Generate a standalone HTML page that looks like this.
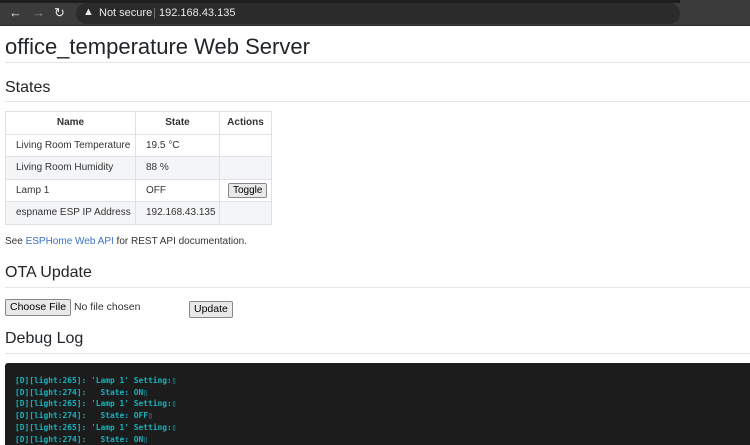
<!DOCTYPE html>
<html><head><style>
*{box-sizing:border-box}
body{margin:0;width:750px;height:445px;overflow:hidden;background:#fff;font-family:"Liberation Sans",sans-serif;color:#212529}
.bar{height:26px;background:#3b3b3b;position:relative;border-bottom:1px solid #2a2a2a}
.bar .top{position:absolute;left:0;top:0;width:680px;height:3px;background:#1e1e1e}
.pill{position:absolute;left:76px;top:3px;width:604px;height:21px;background:#2b2b2b;border-radius:11px}
.bar span{position:absolute;color:#e8e8e8;font-size:11px;top:7px}
.hd{position:absolute;left:5px;color:#212529;font-weight:normal}
.hr{position:absolute;left:5px;right:0;height:1px;background:#e5e5e5}
table{position:absolute;left:5px;top:111px;border-collapse:collapse;font-size:10px;color:#333;table-layout:fixed;width:266px}
td,th{border:1px solid #dee2e6;padding:0 0 0 10px;height:22.5px;text-align:left;white-space:nowrap;overflow:hidden}
th{text-align:center;font-weight:bold;color:#333;padding:0}
tr.g td{background:#f4f5f7}
.btn{display:inline-block;font-size:10px;border:1px solid #888;background:#e9e9e9;border-radius:2px;padding:1px 4px;color:#000;line-height:11px}
.log{position:absolute;left:5px;top:363px;width:745px;height:82px;background:#1c1c1c;border-radius:3px 0 0 0;padding:12px 10px;font-family:"DejaVu Sans Mono",monospace;font-weight:bold;font-size:7.9px;line-height:11.7px;color:#17b3bd;white-space:pre}
</style></head><body>
<div class="bar"><div class="top"></div><div class="pill"></div>
<span style="left:9px;top:5px;font-size:13px">←</span><span style="left:32px;top:5px;font-size:13px;color:#888">→</span><span style="left:54px;top:5px;font-size:13px">↻</span>
<span style="left:83px;top:6px;font-size:11px">▲</span><span style="left:99px">Not secure</span><span style="left:153px;color:#777">|</span><span style="left:159px">192.168.43.135</span></div>
<div class="hd" style="top:34px;font-size:22px">office_temperature Web Server</div>
<div class="hr" style="top:62px"></div>
<div class="hd" style="top:79px;font-size:16px">States</div>
<div class="hr" style="top:101px"></div>
<table>
<colgroup><col style="width:130px"><col style="width:84px"><col style="width:52px"></colgroup>
<tr><th>Name</th><th>State</th><th>Actions</th></tr>
<tr><td>Living Room Temperature</td><td>19.5 °C</td><td></td></tr>
<tr class="g"><td>Living Room Humidity</td><td>88 %</td><td></td></tr>
<tr><td>Lamp 1</td><td>OFF</td><td style="padding-left:8px"><span class="btn">Toggle</span></td></tr>
<tr class="g"><td>espname ESP IP Address</td><td>192.168.43.135</td><td></td></tr>
</table>
<div class="hd" style="top:236px;font-size:10px;color:#333">See <span style="color:#3a70c9">ESPHome Web API</span> for REST API documentation.</div>
<div class="hd" style="top:264px;font-size:16px">OTA Update</div>
<div class="hr" style="top:287px"></div>
<div class="hd" style="top:299px;font-size:10.5px;color:#333"><span class="btn" style="font-size:10.5px;padding:1px 4px;line-height:13px">Choose File</span> No file chosen</div>
<div class="hd" style="left:189px;top:299px"><span class="btn" style="font-size:10.5px;padding:1px 4px;line-height:13px">Update</span></div>
<div class="hd" style="top:330px;font-size:16px">Debug Log</div>
<div class="hr" style="top:353px"></div>
<div class="log">[D][light:265]: 'Lamp 1' Setting:▯
[D][light:274]:   State: ON▯
[D][light:265]: 'Lamp 1' Setting:▯
[D][light:274]:   State: OFF▯
[D][light:265]: 'Lamp 1' Setting:▯
[D][light:274]:   State: ON▯</div>
</body></html>
